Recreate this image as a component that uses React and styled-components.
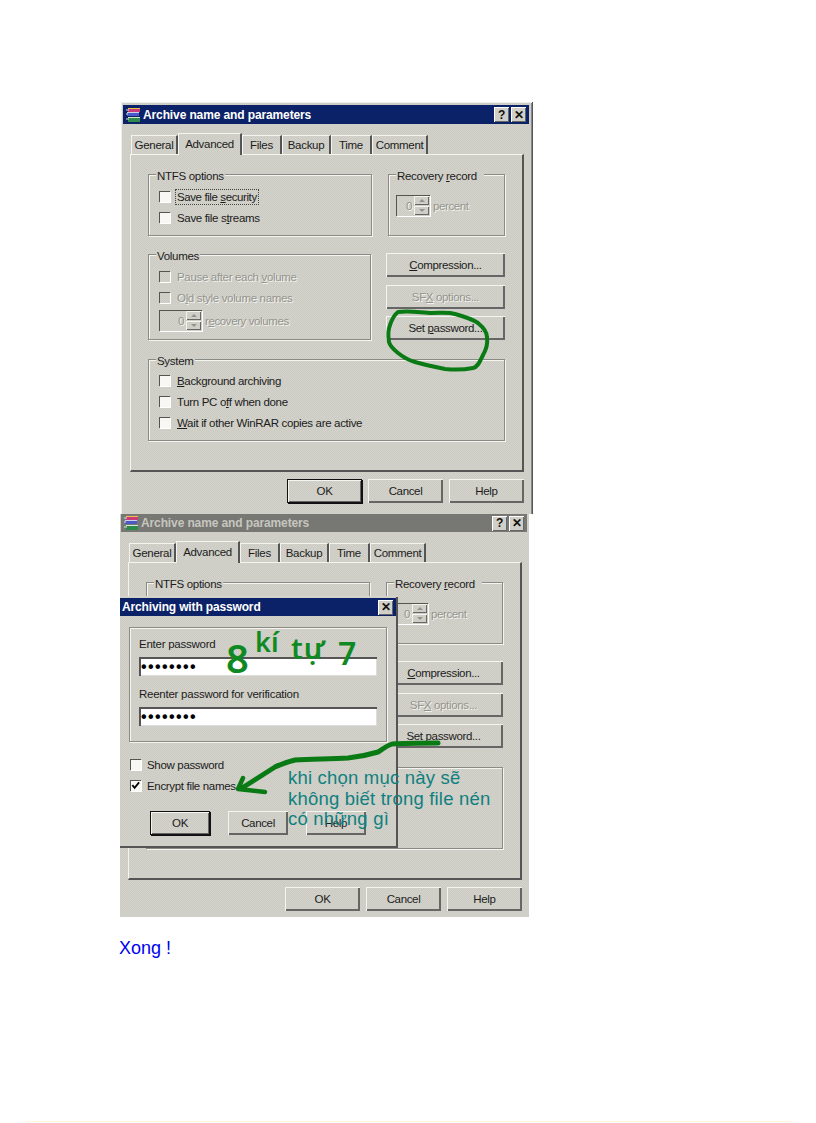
import React from "react";
import styled, { createGlobalStyle, css } from "styled-components";

const Global = createGlobalStyle`
  html, body { margin: 0; padding: 0; background: #fff; }
  * { box-sizing: border-box; }
`;

const dither = css`
  background: repeating-conic-gradient(#cccbc4 0 25%, #d2d2ca 0 50%) 0 0 / 2px 2px;
`;

const Page = styled.div`
  position: relative;
  width: 816px;
  height: 1123px;
  padding-top: 102px;
  overflow: hidden;
  background: #fff;
  font-family: "Liberation Sans", Arial, sans-serif;
  font-size: 11.5px;
  color: #1c1c1c;
`;

const Window = styled.section`
  position: relative;
  display: flex;
  flex-direction: column;
  ${dither}
  ${(p) =>
    p.$active
      ? css`
          margin-left: 121px;
          width: 412px;
          height: 412px;
          padding: 3px 3px 0 2px;
          border-right: 1px solid #555;
          box-shadow: inset 1px 1px 0 #eeeeea, inset -1px 0 0 #888;
        `
      : css`
          margin-left: 120px;
          width: 409px;
          height: 403px;
          padding: 0 2px 0 1px;
        `}
`;

const TitleBar = styled.header`
  display: flex;
  align-items: center;
  flex: none;
  height: ${(p) => (p.$active ? 19 : 18)}px;
  padding: 0 3px 0 2px;
  background: ${(p) => (p.$active ? "#0c2268" : "#777774")};
  color: ${(p) => (p.$active ? "#fff" : "#c6c6be")};
  font-weight: bold;
  font-size: 12px;
  letter-spacing: -0.12px;
`;

const TitleText = styled.span`
  flex: 1;
  margin-left: 2px;
`;

const CaptionButton = styled.span`
  display: flex;
  align-items: center;
  justify-content: center;
  width: 15px;
  height: 15px;
  margin-left: ${(p) => p.$gap || 0}px;
  background: #d0d0c8;
  color: #111;
  font-size: 12px;
  font-weight: bold;
  box-shadow: inset 1px 1px 0 #fff, inset -1px -1px 0 #666;
`;

const Tabs = styled.nav`
  display: flex;
  align-items: flex-end;
  height: 21px;
  margin: 9px 0 0 8px;
  position: relative;
  z-index: 1;
`;

const Tab = styled.span`
  display: flex;
  align-items: center;
  justify-content: center;
  width: ${(p) => p.$w}px;
  height: ${(p) => (p.$on ? 22 : 19)}px;
  margin-bottom: ${(p) => (p.$on ? -1 : 0)}px;
  padding-bottom: ${(p) => (p.$on ? 2 : 0)}px;
  border-top: 1px solid #f4f4f0;
  border-left: 1px solid #f4f4f0;
  border-right: 2px solid #555;
  ${dither}
  letter-spacing: -0.3px;
`;

const Panel = styled.div`
  display: flex;
  flex-direction: column;
  flex: none;
  width: 394px;
  height: 318px;
  margin-left: 7px;
  padding: 19px 17px 0;
  border-top: 1px solid #f4f4f0;
  border-left: 1px solid #f4f4f0;
  border-right: 2px solid #555;
  border-bottom: 2px solid #555;
`;

const Row = styled.div`
  display: flex;
  gap: ${(p) => p.$gap || 0}px;
  height: ${(p) => p.$h}px;
  margin-top: ${(p) => p.$mt || 0}px;
`;

const Group = styled.fieldset`
  position: relative;
  display: flex;
  flex-direction: column;
  width: ${(p) => p.$w}px;
  height: ${(p) => p.$h}px;
  margin: ${(p) => p.$m || "0"};
  padding: ${(p) => p.$pad || "11px 0 0 10px"};
  border: 1px solid #8b8b85;
  box-shadow: 1px 1px 0 #f4f4f0, inset 1px 1px 0 #f4f4f0;
`;

const GroupTitle = styled.span`
  position: absolute;
  top: -6px;
  left: 7px;
  padding: 0 ${(p) => p.$tail || 1}px 0 1px;
  height: 14px;
  line-height: 14px;
  ${dither}
  letter-spacing: -0.3px;
`;

const OptionRow = styled.label`
  display: flex;
  align-items: center;
  gap: ${(p) => p.$gap || 7}px;
  height: 21px;
  ${(p) =>
    p.$disabled &&
    css`
      color: #94948e;
      text-shadow: 1px 1px 0 #f2f2ee;
    `}
`;

const Box = styled.span`
  display: flex;
  align-items: center;
  justify-content: center;
  flex: none;
  width: 11px;
  height: 11px;
  background: ${(p) => (p.$disabled ? "transparent" : "#f7f7f3")};
  box-shadow: inset 1px 1px 0 #55554f, 1px 1px 0 #fff;
`;

const Focus = styled.span`
  margin: 0 -1px;
  padding: 1px;
  outline: 1px dotted #444;
  letter-spacing: -0.4px;
`;

const OptionText = styled.span`
  letter-spacing: -0.33px;
`;

const Field = styled.div`
  display: flex;
  align-items: center;
  gap: 3px;
  margin: ${(p) => p.$inset || 0};
  color: #94948e;
  text-shadow: 1px 1px 0 #f2f2ee;
  letter-spacing: -0.4px;
`;

const Spin = styled.span`
  display: flex;
  align-items: center;
  justify-content: flex-end;
  width: ${(p) => p.$w}px;
  height: 21px;
  box-shadow: inset 1px 1px 0 #55554f, 1px 1px 0 #fff;
`;

const SpinValue = styled.span`
  margin-right: 2px;
`;

const SpinArrows = styled.span`
  display: flex;
  flex-direction: column;
  justify-content: center;
  gap: 1px;
  width: 15px;
  height: 19px;
  margin-right: 1px;
`;

const SpinArrow = styled.span`
  display: flex;
  align-items: center;
  justify-content: center;
  height: 9px;
  box-shadow: inset 1px 1px 0 #f4f4f0, inset -1px -1px 0 #666;
  &::after {
    content: "";
    border-left: 3px solid transparent;
    border-right: 3px solid transparent;
    ${(p) => (p.$up ? "border-bottom: 3px solid #94948e;" : "border-top: 3px solid #94948e;")}
  }
`;

const Side = styled.div`
  display: flex;
  flex-direction: column;
  justify-content: space-between;
  width: 119px;
`;

const Button = styled.button`
  display: block;
  width: ${(p) => p.$w || 119}px;
  height: 24px;
  padding: 0;
  border: 0;
  background: transparent;
  font: inherit;
  letter-spacing: -0.35px;
  color: ${(p) => (p.disabled ? "#94948e" : "#1c1c1c")};
  ${(p) => p.disabled && "text-shadow: 1px 1px 0 #f2f2ee;"}
  box-shadow: ${(p) =>
    p.$primary
      ? "inset 0 0 0 1px #111, inset 2px 2px 0 #f4f4f0, inset -2px -2px 0 #666, 1px 1px 0 #111"
      : "inset 1px 1px 0 #f4f4f0, inset -2px -2px 0 #666"};
`;

const Footer = styled.footer`
  display: flex;
  justify-content: flex-end;
  gap: 6px;
  flex: none;
  width: 394px;
  margin: 7px 0 0 7px;
`;

const Dialog = styled.section`
  position: absolute;
  z-index: 2;
  left: 0;
  top: 83px;
  width: 278px;
  height: 251px;
  display: flex;
  flex-direction: column;
  ${dither}
  padding-top: 1px;
  border-right: 2px solid #555;
  border-bottom: 2px solid #555;
  box-shadow: 0 -1px 0 #d4d4cc;
`;

const DialogTitle = styled.header`
  display: flex;
  align-items: center;
  justify-content: space-between;
  flex: none;
  height: 18px;
  padding: 0 3px 0 2px;
  background: #0c2268;
  color: #fff;
  font-size: 12px;
  font-weight: bold;
  letter-spacing: -0.15px;
`;

const PasswordGroup = styled.div`
  display: flex;
  flex-direction: column;
  width: 258px;
  height: 115px;
  margin: 11px 0 0 9px;
  padding: 9px 9px 0;
  border: 1px solid #8b8b85;
  box-shadow: 1px 1px 0 #f4f4f0, inset 1px 1px 0 #f4f4f0;
`;

const PasswordLabel = styled.span`
  height: 14px;
  line-height: 14px;
  margin-top: ${(p) => p.$mt || 0}px;
  letter-spacing: -0.25px;
`;

const PasswordInput = styled.div`
  display: flex;
  align-items: center;
  height: 19px;
  margin-top: 6px;
  padding-left: 2px;
  background: #fff;
  color: #000;
  box-shadow: inset 0 2px 0 #555, inset 2px 0 0 #555, inset -1px -1px 0 #ddd;
  font-size: 16px;
  font-weight: bold;
  letter-spacing: 1.4px;
`;

const DialogOptions = styled.div`
  display: flex;
  flex-direction: column;
  margin: 12px 0 0 10px;
`;

const DialogButtons = styled.div`
  display: flex;
  gap: 18px;
  margin: 15px 0 0 30px;
`;

const Done = styled.p`
  margin: 21px 0 0 119px;
  font-size: 18px;
  line-height: 21px;
  color: #0000f0;
`;

const EdgeMark = styled.div`
  width: 765px;
  margin: 162px 0 0 26px;
  border-top: 1px dotted #fff7b0;
`;

const Handwriting = styled.div`
  position: absolute;
  z-index: 3;
  left: 226px;
  top: 628px;
  display: flex;
  align-items: flex-start;
  color: #0f8a22;
  font-family: "Noto Sans", sans-serif;
  font-weight: 600;
  white-space: nowrap;
`;

const HandWord = styled.span`
  display: block;
  width: ${(p) => p.$w}px;
  margin-top: ${(p) => p.$top}px;
  font-size: ${(p) => p.$size}px;
  line-height: 1;
  letter-spacing: ${(p) => p.$track || 0}px;
`;

const Note = styled.p`
  position: absolute;
  z-index: 3;
  left: 288px;
  top: 768px;
  margin: 0;
  color: #0f8080;
  font-family: "Liberation Sans", sans-serif;
  font-size: 18.5px;
  letter-spacing: 0.2px;
  line-height: 20.5px;
  white-space: nowrap;
`;

const Ink = styled.svg`
  position: absolute;
  z-index: 3;
  left: 0;
  top: 0;
  pointer-events: none;
`;

const RarIcon = () => (
  <svg width="16" height="16" viewBox="0 0 16 16">
    <rect x="3" y="1" width="12" height="4" fill="#c83a78" />
    <rect x="3" y="1" width="12" height="1" fill="#e8c24a" />
    <rect x="2" y="5" width="12" height="4" fill="#4a58c8" />
    <rect x="2" y="5" width="12" height="1" fill="#cfcfe8" />
    <rect x="3" y="10" width="12" height="5" fill="#2e8a4a" />
    <rect x="3" y="10" width="12" height="1" fill="#cfe8cf" />
    <path d="M1 3h3M1 7h2M1 12h3" stroke="#e0e0e0" strokeWidth="1" />
  </svg>
);

const CheckMark = () => (
  <svg width="9" height="9" viewBox="0 0 10 10">
    <path d="M1.5 4.5l2.5 3 5-6" fill="none" stroke="#000" strokeWidth="2" />
  </svg>
);

const Spinner = ({ w }) => (
  <Spin $w={w}>
    <SpinValue>0</SpinValue>
    <SpinArrows>
      <SpinArrow $up />
      <SpinArrow />
    </SpinArrows>
  </Spin>
);

const Option = ({ children, disabled, gap }) => (
  <OptionRow $disabled={disabled} $gap={gap}>
    <Box $disabled={disabled} />
    <OptionText>{children}</OptionText>
  </OptionRow>
);

const tabs = [
  ["General", 47],
  ["Advanced", 64, true],
  ["Files", 40],
  ["Backup", 49],
  ["Time", 41],
  ["Comment", 56],
];

const ArchiveWindow = ({ active, children }) => (
  <Window $active={active}>
    <TitleBar $active={active}>
      <RarIcon />
      <TitleText>Archive name and parameters</TitleText>
      <CaptionButton>?</CaptionButton>
      <CaptionButton $gap={2}>✕</CaptionButton>
    </TitleBar>
    <Tabs>
      {tabs.map(([t, w, on]) => (
        <Tab key={t} $w={w} $on={on}>
          {t}
        </Tab>
      ))}
    </Tabs>
    <Panel>
      <Row $h={62} $gap={16}>
        <Group $w={224} $h={62}>
          <GroupTitle>NTFS options</GroupTitle>
          <OptionRow>
            <Box />
            <Focus>
              Save file <u>s</u>ecurity
            </Focus>
          </OptionRow>
          <Option>
            Save file s<u>t</u>reams
          </Option>
        </Group>
        <Group $w={117} $h={62} $pad="20px 0 0 7px">
          <GroupTitle $tail={7}>
            Recovery <u>r</u>ecord
          </GroupTitle>
          <Field>
            <Spinner w={34} />
            <span>percent</span>
          </Field>
        </Group>
      </Row>
      <Row $h={87} $mt={17} $gap={15}>
        <Group $w={224} $h={86} $m="1px 0 0">
          <GroupTitle>Volumes</GroupTitle>
          <Option disabled>
            Pause after each <u>v</u>olume
          </Option>
          <Option disabled>
            O<u>l</u>d style volume names
          </Option>
          <Field $inset="2px 0 0">
            <Spinner w={43} />
            <span>
              r<u>e</u>covery volumes
            </span>
          </Field>
        </Group>
        <Side>
          <Button>
            <u>C</u>ompression...
          </Button>
          <Button disabled>
            SF<u>X</u> options...
          </Button>
          <Button>
            Set <u>p</u>assword...
          </Button>
        </Side>
      </Row>
      <Group $w={357} $h={82} $m="19px 0 0" $pad="10px 0 0 10px">
        <GroupTitle>System</GroupTitle>
        <Option>
          <u>B</u>ackground archiving
        </Option>
        <Option>
          Turn PC o<u>f</u>f when done
        </Option>
        <Option>
          <u>W</u>ait if other WinRAR copies are active
        </Option>
      </Group>
    </Panel>
    <Footer>
      <Button $w={75} $primary={active}>
        OK
      </Button>
      <Button $w={75}>Cancel</Button>
      <Button $w={75}>Help</Button>
    </Footer>
    {children}
  </Window>
);

export default function App() {
  return (
    <Page>
      <Global />
      <ArchiveWindow active />
      <ArchiveWindow>
        <Dialog>
          <DialogTitle>
            <span>Archiving with password</span>
            <CaptionButton>✕</CaptionButton>
          </DialogTitle>
          <PasswordGroup>
            <PasswordLabel>Enter password</PasswordLabel>
            <PasswordInput>••••••••</PasswordInput>
            <PasswordLabel $mt={11}>Reenter password for verification</PasswordLabel>
            <PasswordInput>••••••••</PasswordInput>
          </PasswordGroup>
          <DialogOptions>
            <Option gap={6}>Show password</Option>
            <OptionRow $gap={6}>
              <Box>
                <CheckMark />
              </Box>
              <OptionText>Encrypt file names</OptionText>
            </OptionRow>
          </DialogOptions>
          <DialogButtons>
            <Button $w={60} $primary>
              OK
            </Button>
            <Button $w={60}>Cancel</Button>
            <Button $w={60}>Help</Button>
          </DialogButtons>
        </Dialog>
      </ArchiveWindow>
      <Done>Xong !</Done>
      <EdgeMark />
      <Handwriting>
        <HandWord $w={29} $top={10} $size={40}>8</HandWord>
        <HandWord $w={36} $top={0} $size={27}>kí</HandWord>
        <HandWord $w={47} $top={5} $size={29} $track={1}>tự</HandWord>
        <HandWord $w={24} $top={9} $size={32}>7</HandWord>
      </Handwriting>
      <Note>
        khi chọn mục này sẽ
        <br />
        không biết trong file nén
        <br />
        có những gì
      </Note>
      <Ink width="816" height="1123" viewBox="0 0 816 1123" fill="none" stroke="#0a7a14" strokeLinecap="round" strokeLinejoin="round">
        <path
          strokeWidth="4"
          d="M398 312C410 310 422 313 432 313C442 313 448 312 455 314C466 317 472 319 478 323C484 328 487 332 487 337C488 345 486 350 483 355C480 361 478 367 473 368C463 370 455 370 445 369C435 367 425 365 415 362C408 360 403 357 398 353C393 349 390 346 389 342C388 336 388 330 390 325C392 319 394 315 398 312Z"
        />
        <path
          strokeWidth="5"
          d="M438 743C425 743 405 743 392 744C386 746 383 749 378 752C368 755 358 757 348 758C330 759 312 759 295 760C287 762 281 764 275 767C264 774 253 781 242 788"
        />
        <path strokeWidth="4.5" d="M243 778L238 789L265 792" />
      </Ink>
    </Page>
  );
}
